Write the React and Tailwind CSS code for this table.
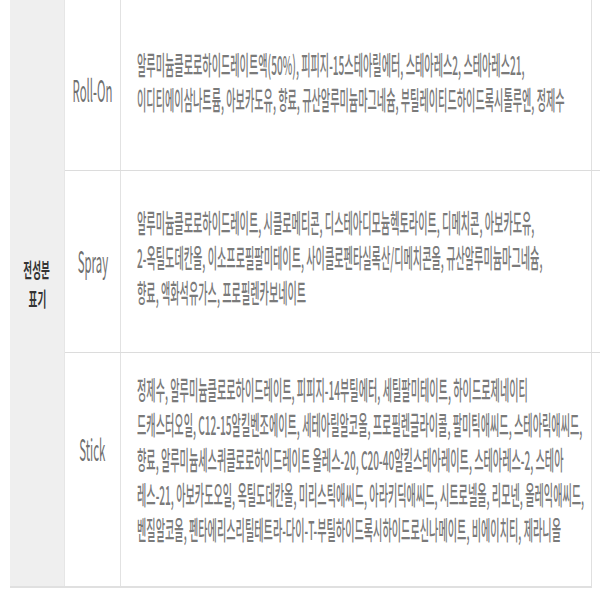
const rows = [
  {
    label: 'Roll-On',
    height: 'h-[171px]',
    pad: 'pb-[8px]',
    labelPad: 'pt-[8px]',
    lines: [
      '알루미늄클로로하이드레이트액(50%), 피피지-15스테아릴에터, 스테아레스2, 스테아레스21,',
      '이디티에이삼나트륨, 아보카도유, 향료, 규산알루미늄마그네슘, 부틸레이티드하이드록시톨루엔, 정제수',
    ],
  },
  {
    label: 'Spray',
    height: 'h-[182px]',
    pad: 'pb-[10px]',
    labelPad: 'pb-[3px]',
    lines: [
      '알루미늄클로로하이드레이트, 시클로메티콘, 디스테아디모늄헥토라이트, 디메치콘, 아보카도유,',
      '2-옥틸도데칸올, 이소프로필팔미테이트, 사이클로펜타실록산/디메치콘올, 규산알루미늄마그네슘,',
      '향료, 액화석유가스, 프로필렌카보네이트',
    ],
  },
  {
    label: 'Stick',
    height: 'flex-1',
    pad: 'pb-[22px]',
    labelPad: 'pb-[44px]',
    lines: [
      '정제수, 알루미늄클로로하이드레이트, 피피지-14부틸에터, 세틸팔미테이트, 하이드로제네이티',
      '드캐스터오일, C12-15알킬벤조에이트, 세테아릴알코올, 프로필렌글라이콜, 팔미틱애씨드, 스테아릭애씨드,',
      '향료, 알루미늄세스퀴클로로하이드레이트 올레스-20, C20-40알킬스테아레이트, 스테아레스-2, 스테아',
      '레스-21, 아보카도오일, 옥틸도데칸올, 미리스틱애씨드, 아라키딕애씨드, 시트로넬올, 리모넨, 올레익애씨드,',
      '벤질알코올, 펜타에리스리틸테트라-다이-T-부틸하이드록시하이드로신나메이트, 비에이치티, 제라니올',
    ],
  },
];

function Row({ row, last }) {
  return (
    <div className={`flex ${row.height} ${last ? '' : 'border-b border-[#dcdcdc]'}`}>
      <div className={`w-[56px] shrink-0 flex items-center justify-center border-r border-[#e2e2e2] ${row.labelPad}`}>
        <span className="inline-block scale-x-[0.38] text-[30px] leading-[36px] text-[#6f6f6f] whitespace-nowrap">
          {row.label}
        </span>
      </div>
      <div className={`flex-1 flex flex-col justify-center pl-[16px] overflow-hidden ${row.pad}`}>
        {row.lines.map((line, i) => (
          <div key={i} className="h-[35px] leading-[35px] whitespace-nowrap">
            <span className="inline-block origin-left scale-x-[0.39] text-[26px] font-medium text-[#7a7a7a]">
              {line}
            </span>
          </div>
        ))}
      </div>
    </div>
  );
}

export default function App() {
  return (
    <div
      className="w-[600px] h-[600px] overflow-hidden bg-white"
      style={{ fontFamily: '"Noto Sans CJK KR", "Noto Sans", sans-serif' }}
    >
      <div className="ml-[10px] w-[582px] h-[588px] flex border-b-2 border-r border-[#e0e0e0]">
        {/* header column */}
        <div className="w-[55px] shrink-0 bg-[#efefef] flex flex-col items-center justify-center pb-[18px] border-r border-[#e6e6e6]">
          <div className="h-[29px] leading-[29px] whitespace-nowrap">
            <span className="inline-block scale-x-[0.48] text-[20px] font-bold text-[#333]">전성분</span>
          </div>
          <div className="h-[29px] leading-[29px] whitespace-nowrap">
            <span className="inline-block scale-x-[0.48] text-[20px] font-bold text-[#333]">표기</span>
          </div>
        </div>
        <div className="flex-1 flex flex-col">
          {rows.map((row, i) => (
            <Row key={row.label} row={row} last={i === rows.length - 1} />
          ))}
        </div>
      </div>
    </div>
  );
}
